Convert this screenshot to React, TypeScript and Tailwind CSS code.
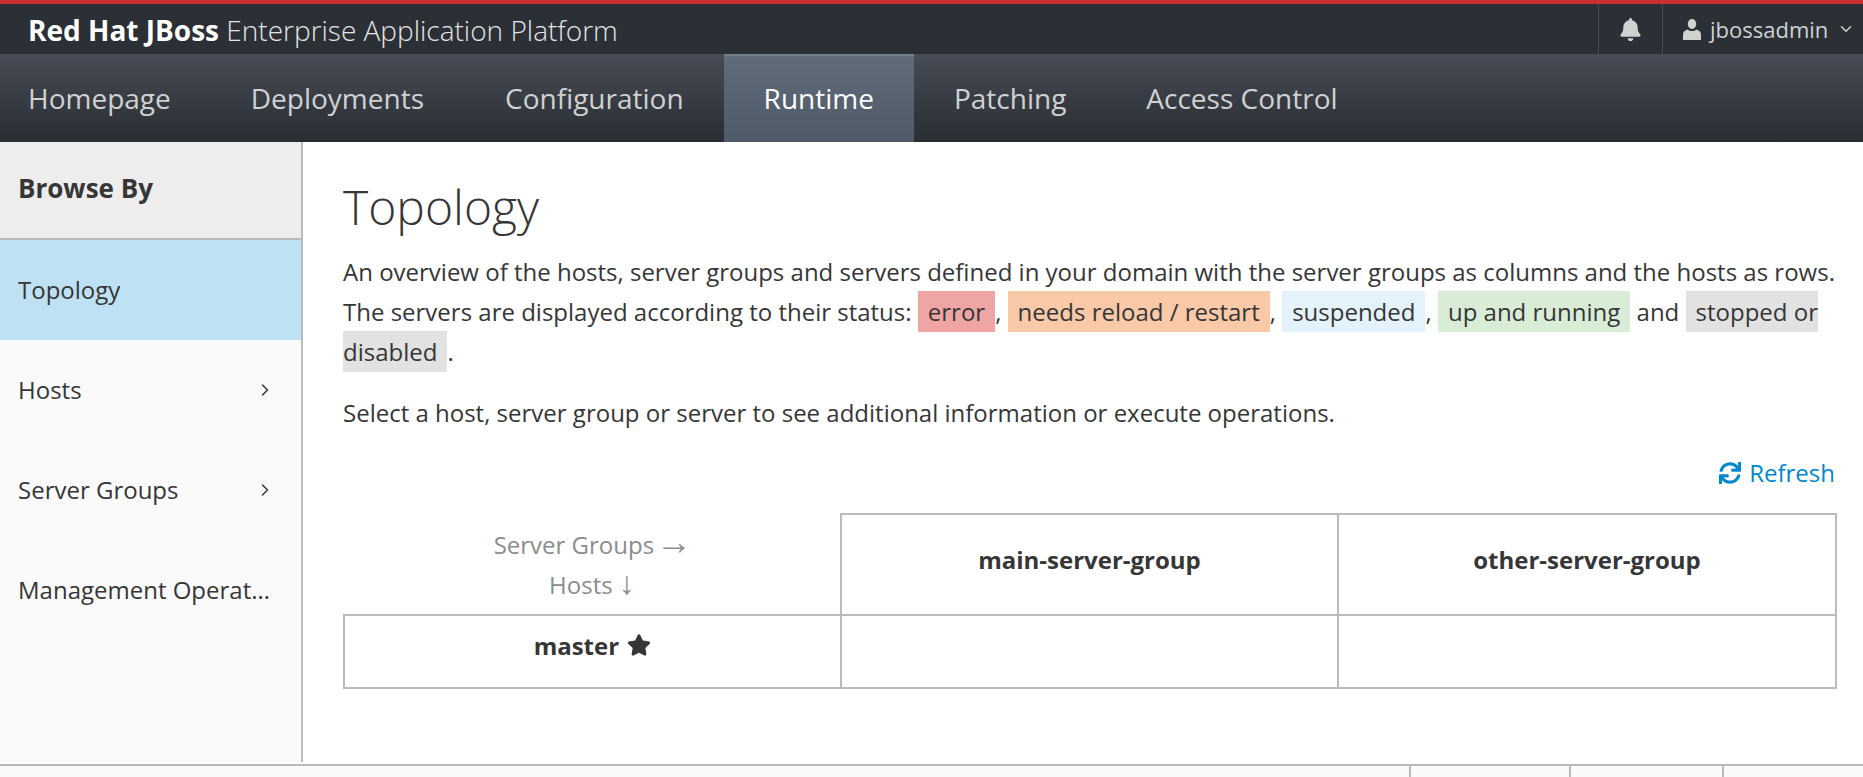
import React from "react";
import { ChevronDown, ChevronRight } from "lucide-react";
import { FaBell, FaStar, FaSync } from "react-icons/fa";

const navItems = ["Homepage", "Deployments", "Configuration", "Runtime", "Patching", "Access Control"];

const sideItems = [
  { label: "Topology", active: true },
  { label: "Hosts", more: true },
  { label: "Server Groups", more: true },
  { label: "Management Operations" },
];

const Mark: React.FC<{ className: string; children: React.ReactNode }> = ({ className, children }) => (
  <span className={`px-[10px] py-[4px] ${className}`}>{children}</span>
);

const UserIcon = () => (
  <svg viewBox="0 0 18 21" className="mr-[9px] h-[21px] w-[18px] shrink-0" fill="currentColor">
    <ellipse cx="9" cy="5" rx="4.2" ry="5" />
    <path d="M4.5 10.5c1.2 1 2.8 1.5 4.5 1.5s3.3-.5 4.5-1.5c2.4.6 4.5 2.2 4.5 5V21H0v-5.5c0-2.8 2.1-4.4 4.5-5z" />
  </svg>
);

export default function App() {
  return (
    <div className="flex h-[777px] w-[1863px] flex-col overflow-hidden bg-white font-['Open_Sans',sans-serif] text-[#363636]">
      {/* Top bar */}
      <header className="flex h-[54px] shrink-0 items-stretch justify-between border-t-4 border-[#cc2f30] bg-[#2b2f36]">
        <div className="pl-[28px] text-[28px] leading-[52px] text-[#e4e4e4]">
          <b className="font-bold text-white">Red Hat JBoss</b> <span className="font-light">Enterprise Application Platform</span>
        </div>
        <div className="flex items-stretch text-[#d1d1d1]">
          <div className="flex w-[64px] items-center justify-center border-l border-[#4a4f57]">
            <FaBell className="text-[23px]" />
          </div>
          <div className="flex w-[201px] items-center border-l border-[#4a4f57] pl-[20px] text-[22px]">
            <UserIcon />
            <span>jbossadmin</span>
            <ChevronDown className="ml-[9px] h-[18px] w-[18px]" />
          </div>
        </div>
      </header>

      {/* Main nav */}
      <nav className="flex h-[88px] shrink-0 bg-gradient-to-b from-[#474c56] to-[#292e34] text-[28px] text-[#d1d1d1]">
        {navItems.map((item, i) =>
          item === "Runtime" ? (
            <a key={item} className="flex items-center border-t-2 border-[#73818f] bg-gradient-to-b from-[#606c7a] to-[#4f5a68] px-[40px] pb-[2px] text-white">
              {item}
            </a>
          ) : (
            <a key={item} className={`flex items-center ${i === 0 ? "pl-[28px]" : "pl-[40px]"} ${i === 1 ? "pr-[41px]" : "pr-[40px]"}`}>
              {item}
            </a>
          ),
        )}
      </nav>

      <div className="flex h-[620px] shrink-0">
        {/* Sidebar */}
        <aside className="flex w-[303px] shrink-0 flex-col border-r-2 border-[#bbbbbb] bg-[#fafafa] text-[24px]">
          <div className="flex h-[98px] items-center border-b-2 border-[#bbbbbb] bg-[#ededed] pb-[4px] pl-[18px] text-[26px] font-bold">Browse By</div>
          {sideItems.map((s) => (
            <div key={s.label} className={`flex h-[100px] items-center justify-between pl-[18px] pr-[26px] ${s.active ? "bg-[#bee1f4]" : ""}`}>
              <span className="truncate">{s.label}</span>
              {s.more && <ChevronRight className="h-[20px] w-[20px] shrink-0" strokeWidth={1.75} />}
            </div>
          ))}
        </aside>

        {/* Content */}
        <main className="min-w-0 flex-1 pl-[40px] pr-[28px]">
          <h1 className="mt-[35px] text-[48px] leading-[60px] font-light">Topology</h1>
          <p className="mt-[15px] text-[24px] leading-[40px]">
            An overview of the hosts, server groups and servers defined in your domain with the server groups as columns and the hosts as rows. The servers are displayed according to their status:{" "}
            <Mark className="bg-[#f0a5a5]">error</Mark>, <Mark className="bg-[#f9c9a8]">needs reload / restart</Mark>, <Mark className="bg-[#e4f2fb]">suspended</Mark>,{" "}
            <Mark className="bg-[#d9ecd6]">up and running</Mark> and <Mark className="bg-[#e2e2e2]">stopped or disabled</Mark>.
          </p>
          <p className="mt-[21px] text-[24px] leading-[40px]">Select a host, server group or server to see additional information or execute operations.</p>
          <div className="mt-[20px] flex items-center justify-end gap-[8px] text-[24px] leading-[40px] text-[#0088ce]">
            <FaSync className="text-[22px]" />
            <span>Refresh</span>
          </div>
          <table className="mt-[20px] w-full table-fixed border-collapse text-[24px] leading-[40px]">
            <colgroup>
              <col className="w-[497px]" />
              <col className="w-[497px]" />
              <col className="w-[498px]" />
            </colgroup>
            <thead>
              <tr className="h-[101px]">
                <th className="text-center font-normal text-[#8c8c8c]">
                  Server Groups <span className="-ml-[4px] -mr-[2px] font-['Liberation_Sans'] text-[36px] leading-none">→</span>
                  <br />
                  Hosts <span className="font-['Liberation_Sans'] text-[32px] leading-none">↓</span>
                </th>
                <th className="border-2 border-[#bbbbbb] pb-[10px] font-bold">main-server-group</th>
                <th className="border-2 border-[#bbbbbb] pb-[10px] font-bold">other-server-group</th>
              </tr>
            </thead>
            <tbody>
              <tr className="h-[73px]">
                <td className="border-2 border-[#bbbbbb] pb-[12px] text-center font-bold">
                  master <FaStar className="ml-[2px] inline align-[-2px] text-[24px]" />
                </td>
                <td className="border-2 border-[#bbbbbb]" />
                <td className="border-2 border-[#bbbbbb]" />
              </tr>
            </tbody>
          </table>
        </main>
      </div>

      {/* Footer */}
      <footer className="mt-[2px] flex flex-1 justify-end border-t-2 border-[#b9b9bd] bg-[#fafafa]">
        <div className="w-[160px] border-l-2 border-[#b9b9bd]" />
        <div className="w-[153px] border-l-2 border-[#b9b9bd]" />
        <div className="w-[141px] border-l-2 border-[#b9b9bd]" />
      </footer>
    </div>
  );
}
